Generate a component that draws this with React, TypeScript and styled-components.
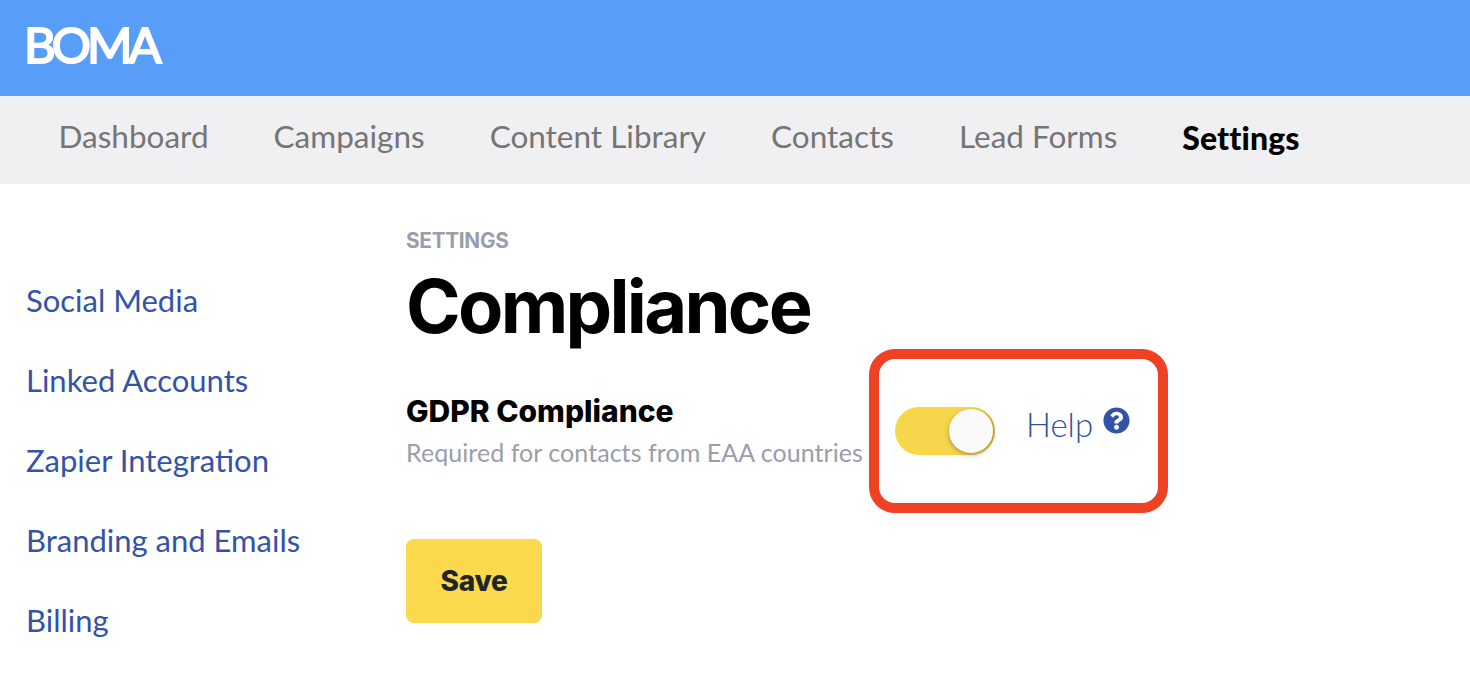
import React from "react";
import styled, { createGlobalStyle } from "styled-components";
import { FaQuestionCircle } from "react-icons/fa";

const Global = createGlobalStyle`
  html, body { margin: 0; padding: 0; background: #fff; }
  body { font-family: "Lato", "Noto Sans", sans-serif; overflow: hidden; }
  * { box-sizing: border-box; }
`;

const Page = styled.div`
  width: 1470px;
  height: 676px;
  overflow: hidden;
`;

const Header = styled.header`
  height: 96px;
  background: #589ef9;
  display: flex;
  align-items: center;
  padding: 0 0 9px 24px;
`;

const Logo = styled.div`
  font-family: "Lato", sans-serif;
  font-weight: 400;
  font-size: 49px;
  line-height: 48px;
  letter-spacing: -4px;
  color: #fff;
  -webkit-text-stroke: 2px #fff;
`;

const Nav = styled.nav`
  height: 88px;
  background: #f0f0f2;
  display: flex;
  align-items: center;
  gap: 65px;
  padding: 0 0 9px 58.5px;
`;

const NavItem = styled.a<{ $active?: boolean }>`
  font-family: "Lato", sans-serif;
  font-size: ${(p) => (p.$active ? "32px" : "31.5px")};
  font-weight: ${(p) => (p.$active ? 900 : 400)};
  letter-spacing: ${(p) => (p.$active ? "0.1px" : "0")};
  margin-top: ${(p) => (p.$active ? "4px" : "0")};
  color: ${(p) => (p.$active ? "#000" : "#757575")};
`;

const Body = styled.div`
  display: flex;
`;

const Sidebar = styled.aside`
  width: 406px;
  padding: 96px 0 0 26px;
  display: flex;
  flex-direction: column;
  gap: 40px;
`;

const SideLink = styled.a`
  font-size: 31px;
  line-height: 40px;
  color: #3353a6;
`;

const Main = styled.main`
  flex: 1;
  padding-top: 44px;
  display: flex;
  flex-direction: column;
  align-items: flex-start;
`;

const Eyebrow = styled.div`
  font-family: "Inter", sans-serif;
  font-size: 20.8px;
  line-height: 26px;
  font-weight: 700;
  letter-spacing: -0.3px;
  color: #9a9dab;
`;

const Title = styled.h1`
  margin: 6px 0 0;
  font-family: "Inter", sans-serif;
  font-size: 74px;
  line-height: 92px;
  font-weight: 700;
  letter-spacing: -2.7px;
  color: #000;
`;

const Row = styled.div`
  margin-top: -3px;
  display: flex;
  align-items: flex-start;
`;

const RowText = styled.div`
  width: 463px;
  padding-top: 42px;
`;

const RowTitle = styled.div`
  font-family: "Inter", sans-serif;
  font-size: 30px;
  line-height: 41px;
  font-weight: 800;
  letter-spacing: 0;
  color: #000;
`;

const RowHint = styled.div`
  font-size: 25px;
  line-height: 40px;
  letter-spacing: 0.05px;
  color: #9a9dab;
  white-space: nowrap;
`;

const Highlight = styled.div`
  width: 299px;
  height: 164px;
  border: 10px solid #ef4123;
  border-radius: 26px;
  display: flex;
  align-items: flex-start;
  padding: 48px 0 0 16px;
`;

const Toggle = styled.div`
  width: 100px;
  height: 48px;
  border-radius: 24px;
  background: #f7d64c;
  border-right: 2px solid #d8b93a;
  display: flex;
  justify-content: flex-end;
  align-items: center;
`;

const Knob = styled.div`
  width: 44px;
  height: 44px;
  border-radius: 50%;
  background: #fafafa;
  box-shadow: 0 2px 5px rgba(0, 0, 0, 0.3);
`;

const HelpLink = styled.a`
  margin-left: 31px;
  margin-top: -5px;
  font-size: 33px;
  font-weight: 300;
  line-height: 44px;
  color: #2f4fa4;
`;

const HelpIcon = styled(FaQuestionCircle)`
  margin-left: 10px;
  margin-top: 0;
  width: 27px;
  height: 27px;
  color: #3353a6;
`;

const SaveButton = styled.button`
  margin-top: 26px;
  width: 136px;
  height: 84px;
  border: none;
  border-radius: 8px;
  background: #fad94c;
  color: #212529;
  font-family: "Inter", sans-serif;
  font-size: 28px;
  font-weight: 800;
  letter-spacing: -0.2px;
`;

const nav = ["Dashboard", "Campaigns", "Content Library", "Contacts", "Lead Forms"];
const side = ["Social Media", "Linked Accounts", "Zapier Integration", "Branding and Emails", "Billing"];

export default function App() {
  return (
    <Page>
      <Global />
      <Header>
        <Logo>BOMA</Logo>
      </Header>
      <Nav>
        {nav.map((n) => (
          <NavItem key={n}>{n}</NavItem>
        ))}
        <NavItem $active>Settings</NavItem>
      </Nav>
      <Body>
        <Sidebar>
          {side.map((s) => (
            <SideLink key={s}>{s}</SideLink>
          ))}
        </Sidebar>
        <Main>
          <Eyebrow>SETTINGS</Eyebrow>
          <Title>Compliance</Title>
          <Row>
            <RowText>
              <RowTitle>GDPR Compliance</RowTitle>
              <RowHint>Required for contacts from EAA countries</RowHint>
            </RowText>
            <Highlight>
              <Toggle>
                <Knob />
              </Toggle>
              <HelpLink>Help</HelpLink>
              <HelpIcon />
            </Highlight>
          </Row>
          <SaveButton>Save</SaveButton>
        </Main>
      </Body>
    </Page>
  );
}
